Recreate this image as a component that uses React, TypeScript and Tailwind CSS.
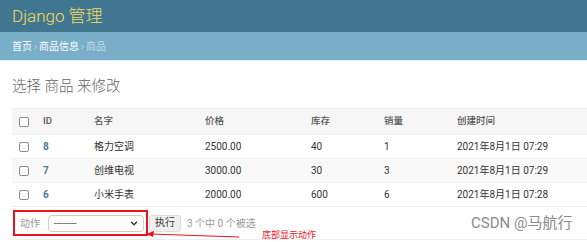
const rows = [
  { id: 8, name: "格力空调", price: "2500.00", stock: "40", sold: "1", created: "2021年8月1日 07:29" },
  { id: 7, name: "创维电视", price: "3000.00", stock: "30", sold: "3", created: "2021年8月1日 07:29" },
  { id: 6, name: "小米手表", price: "2000.00", stock: "600", sold: "6", created: "2021年8月1日 07:28" },
];

function Box() {
  return <span className="block w-[10px] h-[10px] border border-[#8a8a8a] rounded-[2px] bg-white" />;
}

export default function App() {
  return (
    <div
      className="w-[587px] h-[242px] overflow-hidden bg-white relative"
      style={{ fontFamily: '"Roboto", "Noto Sans CJK SC", sans-serif' }}
    >
      <div className="h-[32px] bg-[#417690] flex items-center px-[12px]">
        <span className="text-[#f5dd5d] text-[17px] font-light leading-none">Django 管理</span>
      </div>
      <div className="h-[28px] bg-[#79aec8] flex items-center px-[12px] text-[10px] text-white">
        <span>首页</span>
        <span className="mx-[2px] text-[#c4dce8]">›</span>
        <span>商品信息</span>
        <span className="mx-[2px] text-[#c4dce8]">›</span>
        <span className="text-[#c4dce8]">商品</span>
      </div>
      <div className="h-[1px] bg-[#e0eef5]" />
      <div className="pl-[12px]">
        <h1 className="text-[14.5px] text-[#666] font-light mt-[16px] mb-[11px] leading-[20px]">选择 商品 来修改</h1>
        <div className="border-t border-[#eee]">
          <div className="flex items-center h-[26px] bg-[#f6f6f6] text-[9.5px] font-medium text-[#555] border-b border-[#eee]">
            <div className="w-[31px] pl-[7px]"><Box /></div>
            <div className="w-[51px]">ID</div>
            <div className="w-[111px]">名字</div>
            <div className="w-[106px]">价格</div>
            <div className="w-[73px]">库存</div>
            <div className="w-[73px]">销量</div>
            <div>创建时间</div>
          </div>
          {rows.map((r, i) => (
            <div
              key={r.id}
              className={`flex items-center h-[24px] text-[10px] text-[#333] border-b border-[#eee] ${i % 2 === 1 ? "bg-[#f9f9f9]" : "bg-white"}`}
            >
              <div className="w-[31px] pl-[7px]"><Box /></div>
              <div className="w-[51px] font-bold text-[#447e9b]">{r.id}</div>
              <div className="w-[111px]">{r.name}</div>
              <div className="w-[106px]">{r.price}</div>
              <div className="w-[73px]">{r.stock}</div>
              <div className="w-[73px]">{r.sold}</div>
              <div>{r.created}</div>
            </div>
          ))}
          <div className="flex items-center h-[33px] border-b border-[#eee] text-[10px] text-[#999]">
            <div className="flex shrink-0 items-center h-[26px] border-2 border-[#e8141e] pl-[5px] w-[135px] ml-[1px]">
              <span className="mr-[8px] whitespace-nowrap">动作</span>
              <div className="flex items-center justify-between w-[96px] h-[17px] border border-[#ccc] rounded-[4px] px-[5px] text-[#333]">
                <span className="text-[9px] leading-none">---------</span>
                <svg width="8" height="5" viewBox="0 0 9 6" fill="none" stroke="#333" strokeWidth="1.6">
                  <path d="M1 1l3.5 3.5L8 1" />
                </svg>
              </div>
            </div>
            <button className="ml-[1px] h-[17px] w-[32px] bg-[#f0f0f0] border border-[#ddd] rounded-[3px] text-[10px] text-[#333] leading-none">执行</button>
            <span className="ml-[6px] whitespace-nowrap text-[#999]">3 个中 0 个被选</span>
          </div>
        </div>
      </div>
      <svg className="absolute left-[145px] top-[229px]" width="100" height="10" viewBox="0 0 100 10">
        <path d="M5 5 L94 8" stroke="#e8141e" strokeWidth="1.2" fill="none" />
        <path d="M1 5 L9 2 L8 8 Z" fill="#e8141e" />
      </svg>
      <span className="absolute left-[262px] top-[231px] text-[9px] text-[#e8141e] leading-none">底部显示动作</span>
      <span className="absolute left-[471px] top-[216px] text-[15px] text-[#8a8a8a] leading-none">CSDN @马航行</span>
    </div>
  );
}
